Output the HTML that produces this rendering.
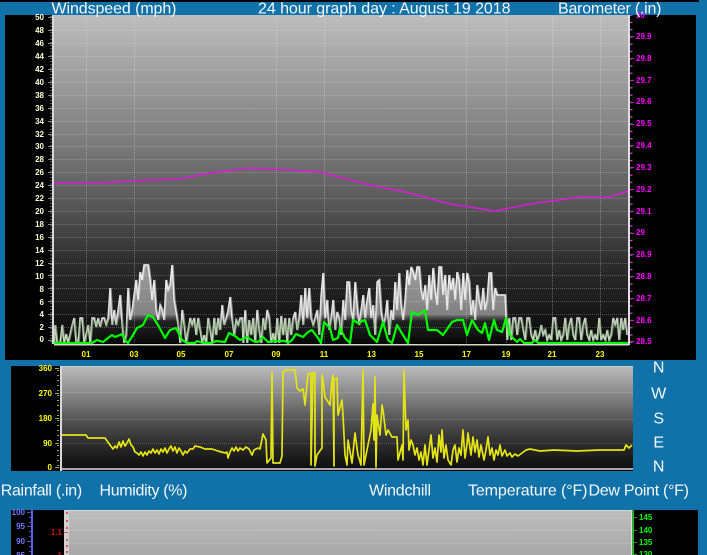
<!DOCTYPE html>
<html><head><meta charset="utf-8"><style>
html,body{margin:0;padding:0;background:#1171a9;width:707px;height:555px;overflow:hidden}
svg{display:block;position:absolute;left:0;top:0}
text{font-family:"Liberation Sans",sans-serif}
.t{font-size:16px;fill:#f4f8fb}
.y{font-size:8px;fill:#ffffd8;text-anchor:end;font-weight:bold}
.m{font-size:8px;fill:#f0f;font-weight:bold}
.h{font-size:8px;fill:#ff0;text-anchor:middle;font-weight:bold}
.d{font-size:8px;fill:#ff0;text-anchor:end;font-weight:bold}
.b{font-size:8px;fill:#7777ff;text-anchor:end;font-weight:bold}
.g{font-size:8px;fill:#0f0;font-weight:bold}
.c{font-size:16px;fill:#f4f8fb;text-anchor:middle}
</style></head><body>
<svg width="707" height="555" viewBox="0 0 707 555" xmlns="http://www.w3.org/2000/svg">
<defs>
<linearGradient id="g1" gradientUnits="userSpaceOnUse" x1="0" y1="15" x2="0" y2="343">
<stop offset="0" stop-color="#bdbdbd"/><stop offset=".32" stop-color="#888"/><stop offset=".566" stop-color="#5a5a5a"/><stop offset=".75" stop-color="#2e2e2e"/><stop offset="1" stop-color="#0a0a0a"/>
</linearGradient>
<linearGradient id="g2" gradientUnits="userSpaceOnUse" x1="0" y1="366" x2="0" y2="469">
<stop offset="0" stop-color="#bcbcbc"/><stop offset=".26" stop-color="#8a8a8a"/><stop offset=".52" stop-color="#555"/><stop offset=".75" stop-color="#2d2d2d"/><stop offset="1" stop-color="#0d0d0d"/>
</linearGradient>
<linearGradient id="g3" gradientUnits="userSpaceOnUse" x1="0" y1="510" x2="0" y2="555">
<stop offset="0" stop-color="#bdbdbd"/><stop offset="1" stop-color="#a8a8a8"/>
</linearGradient>
<linearGradient id="sf" gradientUnits="userSpaceOnUse" x1="0" y1="265" x2="0" y2="343">
<stop offset="0" stop-color="#fff" stop-opacity=".4"/><stop offset=".62" stop-color="#fff" stop-opacity=".34"/><stop offset=".72" stop-color="#fff" stop-opacity=".04"/><stop offset="1" stop-color="#c8e8c0" stop-opacity="0"/>
</linearGradient>
<linearGradient id="ss" gradientUnits="userSpaceOnUse" x1="0" y1="265" x2="0" y2="343">
<stop offset="0" stop-color="#f0f0f0"/><stop offset=".66" stop-color="#e0e0e0"/><stop offset=".76" stop-color="#b0c8a8"/><stop offset="1" stop-color="#c8e0c0"/>
</linearGradient>
<pattern id="vt" width="2" height="2" patternUnits="userSpaceOnUse"><rect width="1" height="1" fill="#fff" opacity=".3"/></pattern>
<pattern id="hd" width="2" height="2" patternUnits="userSpaceOnUse"><rect width="1" height="2" fill="#fff" opacity=".24"/></pattern>
<pattern id="lt" width="4" height="3.22" patternUnits="userSpaceOnUse"><rect width="4" height="1" fill="#6c6c6c"/></pattern>
<pattern id="rt" width="4" height="7.27" patternUnits="userSpaceOnUse"><rect width="4" height="1.2" fill="#d050d0"/></pattern>
<pattern id="yt" width="2" height="5" patternUnits="userSpaceOnUse"><rect width="2" height="1" fill="#aaaa20"/></pattern>
</defs>

<!-- top strip -->
<rect x="0" y="0" width="699" height="2" fill="#000"/>

<!-- chart 1 -->
<rect x="5" y="15" width="691" height="345" fill="#000"/>
<rect x="54" y="15" width="574" height="328" fill="url(#g1)"/>
<g fill="url(#hd)">
<rect x="54" y="30" width="574" height="1"/><rect x="54" y="43" width="574" height="1"/><rect x="54" y="56" width="574" height="1"/><rect x="54" y="69" width="574" height="1"/><rect x="54" y="82" width="574" height="1"/><rect x="54" y="95" width="574" height="1"/><rect x="54" y="108" width="574" height="1"/><rect x="54" y="121" width="574" height="1"/><rect x="54" y="134" width="574" height="1"/><rect x="54" y="146" width="574" height="1"/><rect x="54" y="159" width="574" height="1"/><rect x="54" y="172" width="574" height="1"/><rect x="54" y="185" width="574" height="1"/><rect x="54" y="198" width="574" height="1"/><rect x="54" y="211" width="574" height="1"/><rect x="54" y="224" width="574" height="1"/><rect x="54" y="237" width="574" height="1"/><rect x="54" y="250" width="574" height="1"/><rect x="54" y="263" width="574" height="1"/><rect x="54" y="275" width="574" height="1"/><rect x="54" y="288" width="574" height="1"/><rect x="54" y="301" width="574" height="1"/><rect x="54" y="314" width="574" height="1"/><rect x="54" y="327" width="574" height="1"/>
</g>
<g fill="url(#vt)">
<rect x="86" y="15" width="1" height="328"/><rect x="134" y="15" width="1" height="328"/><rect x="181" y="15" width="1" height="328"/><rect x="229" y="15" width="1" height="328"/><rect x="276" y="15" width="1" height="328"/><rect x="324" y="15" width="1" height="328"/><rect x="371" y="15" width="1" height="328"/><rect x="419" y="15" width="1" height="328"/><rect x="466" y="15" width="1" height="328"/><rect x="506" y="15" width="1" height="328"/><rect x="552" y="15" width="1" height="328"/><rect x="600" y="15" width="1" height="328"/>
</g>

<polyline id="gust" fill="url(#sf)" stroke="url(#ss)" stroke-width="1.4" stroke-linejoin="miter" points="54,343 55,325 57,343 60,343 62,325 64,343 66,334 68,343 70,334 72,325 74,318 76,343 78,343 80,318 82,318 84,343 86,334 88,325 90,343 92,318 94,318 96,327 98,318 100,327 102,318 104,318 106,325 108,318 110,288 112,325 114,310 116,325 118,310 120,295 122,325 124,343 126,335 128,288 130,320 132,310 134,295 136,280 138,300 140,272 142,280 144,265 146,265 148,265 150,280 152,300 154,280 156,310 158,320 160,305 162,310 164,320 166,280 168,290 170,285 172,265 174,300 176,312 178,325 180,343 182,310 184,325 186,343 188,330 190,318 192,325 194,318 196,335 198,318 200,330 202,343 204,335 206,343 208,318 210,330 212,343 214,318 216,335 218,318 220,330 222,305 224,325 226,318 228,310 230,297 232,320 234,335 236,320 238,325 240,318 242,318 243,343 245,310 247,343 249,320 251,335 253,318 255,343 257,310 259,330 261,343 263,318 265,330 267,310 269,318 271,343 273,333 275,343 277,318 279,343 281,316 283,335 285,318 287,343 289,318 291,335 293,318 295,312 297,330 299,318 301,295 303,325 305,288 307,318 309,288 311,318 313,325 315,318 317,310 319,335 321,296 323,273 325,318 327,300 329,330 331,318 333,300 335,330 337,312 339,318 341,335 343,300 345,320 347,282 349,282 351,310 353,320 355,282 357,305 359,325 361,310 363,295 365,318 367,300 369,288 371,318 373,305 375,335 377,282 379,280 381,310 383,325 385,318 387,300 389,335 391,310 393,320 395,282 397,310 399,273 401,305 403,320 405,300 407,270 409,285 411,267 413,272 415,280 417,267 419,267 421,290 423,300 425,285 427,310 429,275 431,300 433,268 435,290 437,305 439,267 441,267 443,295 445,275 447,310 449,275 451,290 453,278 455,300 457,272 459,280 461,310 463,273 465,300 467,273 469,282 471,315 473,300 475,320 477,285 479,300 481,310 483,288 485,310 487,300 489,273 491,273 493,310 495,288 497,295 499,295 501,295 503,295 505,295 507,340 509,318 511,340 513,318 515,318 517,335 519,318 521,318 523,330 525,340 527,318 529,318 531,335 533,340 535,330 537,340 539,335 541,325 543,335 545,330 547,340 549,335 551,340 553,318 555,318 557,340 559,330 561,340 563,335 565,318 567,340 569,325 571,318 573,335 575,340 577,318 579,318 581,340 583,325 585,318 587,335 589,340 591,330 593,340 595,335 597,340 599,318 601,340 603,335 605,340 607,330 609,340 611,335 613,318 615,325 617,318 619,340 621,318 623,330 625,318 627,335"/>
<use href="#gust" transform="translate(1,0)" opacity=".55"/>
<polyline fill="none" stroke="#0f0" stroke-width="2.2" stroke-linejoin="round" points="54,343 92,343 97,340 103,342 108,338 112,335 115,337 120,335 122,334 125,340 128,343 133,335 137,328 143,325 148,315 153,317 158,325 165,338 170,330 176,328 182,340 187,343 195,343 197,341 203,343 212,343 216,341 225,342 229,333 235,336 240,340 247,337 253,341 258,342 263,337 268,342 275,341 285,341 288,343 292,340 296,334 303,337 308,332 312,330 318,338 321,343 324,322 330,328 333,340 338,338 340,328 345,338 350,343 353,320 358,323 365,320 370,335 377,342 383,322 388,340 392,343 397,325 403,335 408,343 412,312 418,315 425,310 428,330 437,330 443,335 452,322 457,320 463,320 467,335 472,320 478,330 482,333 485,323 489,340 494,320 497,330 502,332 506,318 510,335 515,340 517,342 520,339 524,343 532,343 535,340 538,343 628,343"/>
<polyline fill="none" stroke="#d81cd8" stroke-width="1.6" points="54,183 100,183 130,181 180,179 210,173 250,168 290,170 320,172 370,185 410,193 450,204 495,211 530,204 580,197 610,197 628,191"/>

<!-- axes chart 1 -->
<rect x="52" y="15" width="2" height="329" fill="#d8d8d8"/>
<rect x="54" y="344" width="575" height="1.5" fill="#d0dcc8"/>
<rect x="628" y="15" width="2" height="330" fill="#e0e0e0"/>
<rect x="50" y="15" width="2" height="328" fill="url(#lt)"/>
<rect x="630" y="15" width="2.5" height="328" fill="url(#rt)"/>
<g fill="#888">
<rect x="48" y="17" width="4" height="1"/><rect x="48" y="30" width="4" height="1"/><rect x="48" y="43" width="4" height="1"/><rect x="48" y="56" width="4" height="1"/><rect x="48" y="69" width="4" height="1"/><rect x="48" y="82" width="4" height="1"/><rect x="48" y="95" width="4" height="1"/><rect x="48" y="108" width="4" height="1"/><rect x="48" y="121" width="4" height="1"/><rect x="48" y="134" width="4" height="1"/><rect x="48" y="146" width="4" height="1"/><rect x="48" y="159" width="4" height="1"/><rect x="48" y="172" width="4" height="1"/><rect x="48" y="185" width="4" height="1"/><rect x="48" y="198" width="4" height="1"/><rect x="48" y="211" width="4" height="1"/><rect x="48" y="224" width="4" height="1"/><rect x="48" y="237" width="4" height="1"/><rect x="48" y="250" width="4" height="1"/><rect x="48" y="263" width="4" height="1"/><rect x="48" y="275" width="4" height="1"/><rect x="48" y="288" width="4" height="1"/><rect x="48" y="301" width="4" height="1"/><rect x="48" y="314" width="4" height="1"/><rect x="48" y="327" width="4" height="1"/><rect x="48" y="340" width="4" height="1"/>
</g>
<g fill="#a030a0">
<rect x="630" y="36" width="4" height="1"/><rect x="630" y="58" width="4" height="1"/><rect x="630" y="80" width="4" height="1"/><rect x="630" y="102" width="4" height="1"/><rect x="630" y="124" width="4" height="1"/><rect x="630" y="145" width="4" height="1"/><rect x="630" y="167" width="4" height="1"/><rect x="630" y="189" width="4" height="1"/><rect x="630" y="211" width="4" height="1"/><rect x="630" y="233" width="4" height="1"/><rect x="630" y="254" width="4" height="1"/><rect x="630" y="276" width="4" height="1"/><rect x="630" y="298" width="4" height="1"/><rect x="630" y="320" width="4" height="1"/><rect x="630" y="341" width="4" height="1"/>
</g>
<g>
<text class="y" x="44" y="20">50</text><text class="y" x="44" y="33">48</text><text class="y" x="44" y="46">46</text><text class="y" x="44" y="59">44</text><text class="y" x="44" y="72">42</text><text class="y" x="44" y="85">40</text><text class="y" x="44" y="98">38</text><text class="y" x="44" y="111">36</text><text class="y" x="44" y="124">34</text><text class="y" x="44" y="137">32</text><text class="y" x="44" y="149">30</text><text class="y" x="44" y="162">28</text><text class="y" x="44" y="175">26</text><text class="y" x="44" y="188">24</text><text class="y" x="44" y="201">22</text><text class="y" x="44" y="214">20</text><text class="y" x="44" y="227">18</text><text class="y" x="44" y="240">16</text><text class="y" x="44" y="253">14</text><text class="y" x="44" y="266">12</text><text class="y" x="44" y="279">10</text><text class="y" x="44" y="292">8</text><text class="y" x="44" y="305">6</text><text class="y" x="44" y="317">4</text><text class="y" x="44" y="330">2</text><text class="y" x="44" y="342">0</text>
</g>
<g>
<text class="m" x="636" y="18">30</text><text class="m" x="636" y="39">29.9</text><text class="m" x="636" y="61">29.8</text><text class="m" x="636" y="83">29.7</text><text class="m" x="636" y="104">29.6</text><text class="m" x="636" y="126">29.5</text><text class="m" x="636" y="148">29.4</text><text class="m" x="636" y="170">29.3</text><text class="m" x="636" y="192">29.2</text><text class="m" x="636" y="214">29.1</text><text class="m" x="636" y="235">29</text><text class="m" x="636" y="257">28.9</text><text class="m" x="636" y="279">28.8</text><text class="m" x="636" y="301">28.7</text><text class="m" x="636" y="323">28.6</text><text class="m" x="636" y="344">28.5</text>
</g>
<g>
<text class="h" x="86" y="357">01</text><text class="h" x="134" y="357">03</text><text class="h" x="181" y="357">05</text><text class="h" x="229" y="357">07</text><text class="h" x="276" y="357">09</text><text class="h" x="324" y="357">11</text><text class="h" x="371.5" y="357">13</text><text class="h" x="419" y="357">15</text><text class="h" x="466.5" y="357">17</text><text class="h" x="506" y="357">19</text><text class="h" x="552" y="357">21</text><text class="h" x="600" y="357">23</text>
</g>

<!-- chart 2 -->
<rect x="11" y="366" width="622" height="105" fill="#000"/>
<rect x="62" y="366" width="571" height="103" fill="url(#g2)"/>
<rect x="62" y="366" width="571" height="1" fill="#d0d0d0"/>
<g fill="url(#hd)"><rect x="62" y="392" width="571" height="1"/><rect x="62" y="419" width="571" height="1"/><rect x="62" y="443" width="571" height="1"/></g>
<rect x="60" y="366" width="2" height="105" fill="#d8d8d8"/>
<rect x="62" y="468" width="571" height="2" fill="#a8a8a8"/>
<rect x="57" y="368" width="2" height="100" fill="url(#yt)"/>
<g fill="#aaaa20">
<rect x="55" y="368" width="4" height="1"/><rect x="55" y="393" width="4" height="1"/><rect x="55" y="418" width="4" height="1"/><rect x="55" y="443" width="4" height="1"/><rect x="55" y="467" width="4" height="1"/>
</g>
<text class="d" x="52" y="371">360</text><text class="d" x="52" y="396">270</text><text class="d" x="52" y="421">180</text><text class="d" x="52" y="446">90</text><text class="d" x="52" y="470">0</text>
<polyline fill="none" stroke="#e4e414" stroke-width="1.7" stroke-linejoin="round" points="62,435 86,435 88,438 105,438 110,445 113,449 115,446 117,448 119,442 121,447 123,441 125,446 127,443 129,439 131,445 133,447 135,452 137,453 139,455 141,452 143,456 145,452 147,455 149,451 151,453 153,449 155,453 157,450 159,454 161,449 163,452 165,448 167,453 169,449 171,446 173,451 175,447 177,453 179,448 181,451 183,455 185,451 187,453 190,449 193,449 195,446 200,447 205,449 212,449 218,451 225,453 227,452 228,458 230,452 232,448 234,451 236,447 238,451 240,448 243,450 246,447 249,449 252,455 254,450 258,448 260,449 263,434 266,440 267,463 271,458 272,372 273,463 280,463 282,456 283,372 287,370 295,370 297,388 300,391 303,389 305,405 308,374 311,373 311,465 313,373 315,373 315,466 317,455 322,448 322,375 323,380 325,397 330,405 332,380 333,375 334,466 334,380 337,378 338,415 342,400 343,415 345,455 347,465 348,440 352,463 355,433 358,455 361,465 363,370 364,465 367,450 371,430 373,404 374,440 375,377 376,467 377,415 380,435 382,405 383,410 386,435 388,430 392,437 397,437 398,460 402,445 403,460 404,370 406,430 408,420 409,450 411,440 413,445 415,455 417,448 419,460 421,452 423,465 425,445 427,465 429,450 431,435 433,458 435,448 437,462 439,435 441,452 442,430 444,458 446,445 448,460 451,465 453,450 455,445 457,462 459,448 461,455 463,430 465,458 467,444 468,433 471,455 473,437 475,452 477,440 479,457 481,445 484,460 486,450 488,437 490,455 492,448 494,460 496,450 498,455 500,445 502,456 505,450 507,456 510,453 512,457 515,454 518,456 522,453 526,450 530,449 540,451 554,450 577,451 600,450 624,450 626,445 629,448 632,445"/>

<!-- chart 3 -->
<rect x="11" y="510" width="687" height="45" fill="#000"/>
<rect x="64" y="510" width="568" height="45" fill="url(#g3)"/>
<rect x="64" y="510" width="568" height="1" fill="#d8d8d8"/>
<rect x="64" y="510" width="5" height="45" fill="#d0d0d0"/>
<rect x="631" y="510" width="2" height="45" fill="#e0e0e0"/>
<g fill="url(#hd)"><rect x="69" y="518" width="562" height="1"/><rect x="69" y="530" width="562" height="1"/><rect x="69" y="543" width="562" height="1"/></g>
<rect x="31" y="510" width="2" height="45" fill="#6060e0"/>
<g fill="#5050b0"><rect x="27" y="512" width="4" height="1"/><rect x="29" y="517" width="2" height="1"/><rect x="29" y="522" width="2" height="1"/><rect x="27" y="526" width="4" height="1"/><rect x="29" y="531" width="2" height="1"/><rect x="29" y="536" width="2" height="1"/><rect x="27" y="541" width="4" height="1"/><rect x="29" y="546" width="2" height="1"/><rect x="29" y="551" width="2" height="1"/></g>
<g fill="#e85050"><rect x="66" y="512" width="2" height="2"/><rect x="66" y="520" width="2" height="2"/><rect x="66" y="527" width="2" height="2"/><rect x="64" y="532" width="4" height="1"/><rect x="66" y="539" width="2" height="2"/><rect x="66" y="545" width="2" height="2"/><rect x="66" y="551" width="2" height="2"/></g>
<rect x="632" y="510" width="2" height="45" fill="#2ab02a"/>
<g fill="#1a9a1a"><rect x="634" y="517" width="3" height="1"/><rect x="634" y="530" width="3" height="1"/><rect x="634" y="542" width="3" height="1"/><rect x="634" y="554" width="3" height="1"/></g>
<text class="b" x="25" y="515">100</text><text class="b" x="25" y="529">95</text><text class="b" x="25" y="544">90</text><text class="b" x="25" y="558">85</text>
<text x="62" y="535" text-anchor="end" font-size="8" font-weight="bold" fill="#e01010">1.1</text>
<text x="62" y="558" text-anchor="end" font-size="8" font-weight="bold" fill="#e01010">1</text>
<text class="g" x="639" y="520">145</text><text class="g" x="639" y="533">140</text><text class="g" x="639" y="545">135</text><text class="g" x="639" y="557">130</text>

<!-- titles -->
<text class="t" x="51.5" y="13.5" textLength="125" lengthAdjust="spacing">Windspeed (mph)</text>
<text class="t" x="258" y="13.5" textLength="252.5" lengthAdjust="spacing">24 hour graph day : August 19 2018</text>
<text class="t" x="558" y="13.5" textLength="103.5" lengthAdjust="spacing">Barometer (.in)</text>
<text class="t" x="0.7" y="495.5" textLength="81.5" lengthAdjust="spacing">Rainfall (.in)</text>
<text class="t" x="99.5" y="495.5" textLength="88" lengthAdjust="spacing">Humidity (%)</text>
<text class="t" x="369" y="495.5" textLength="62" lengthAdjust="spacing">Windchill</text>
<text class="t" x="468" y="495.5" textLength="119.5" lengthAdjust="spacing">Temperature (°F)</text>
<text class="t" x="588.5" y="495.5" textLength="100.5" lengthAdjust="spacing">Dew Point (°F)</text>
<text class="c" x="658.7" y="372.5">N</text>
<text class="c" x="658.7" y="398.5">W</text>
<text class="c" x="658.7" y="423.5">S</text>
<text class="c" x="658.7" y="447.5">E</text>
<text class="c" x="658.7" y="471.5">N</text>
</svg>
</body></html>
